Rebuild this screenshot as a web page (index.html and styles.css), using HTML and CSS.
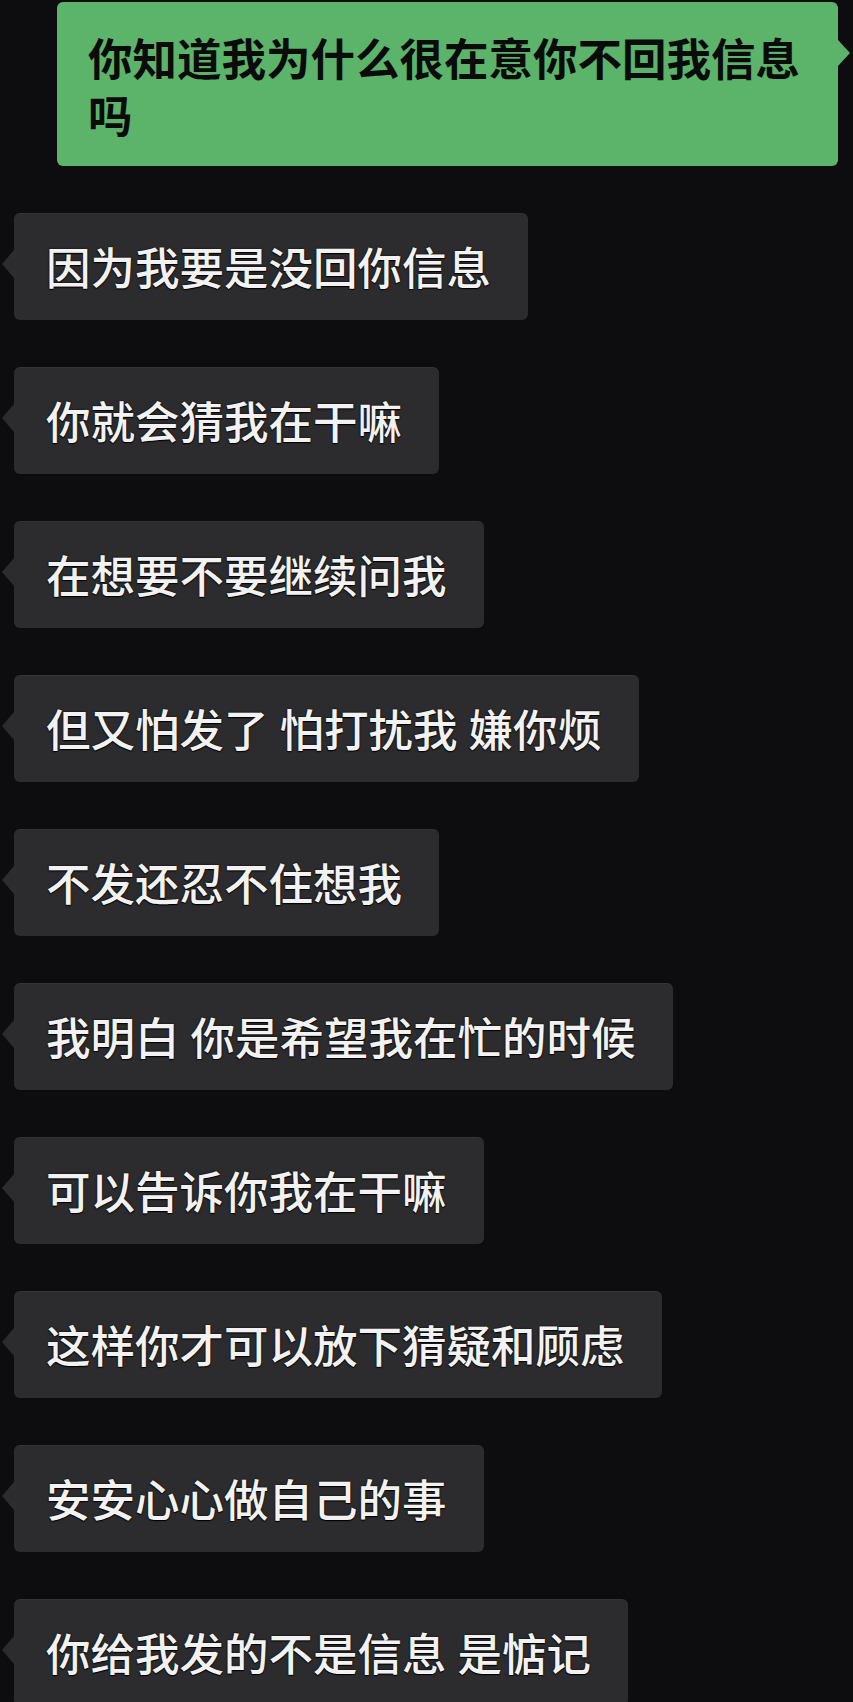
FILE: index.html
```html
<!DOCTYPE html>
<html lang="zh-CN">
<head>
<meta charset="utf-8">
<title>聊天</title>
<link rel="stylesheet" href="styles.css">
</head>
<body>
<div class="chat">
  <div class="row row-me">
    <div class="bubble bubble-me">你知道我为什么很在意你不回我信息吗</div>
  </div>
  <div class="row"><div class="bubble bubble-other">因为我要是没回你信息</div></div>
  <div class="row"><div class="bubble bubble-other">你就会猜我在干嘛</div></div>
  <div class="row"><div class="bubble bubble-other">在想要不要继续问我</div></div>
  <div class="row"><div class="bubble bubble-other">但又怕发了 怕打扰我 嫌你烦</div></div>
  <div class="row"><div class="bubble bubble-other">不发还忍不住想我</div></div>
  <div class="row"><div class="bubble bubble-other">我明白 你是希望我在忙的时候</div></div>
  <div class="row"><div class="bubble bubble-other">可以告诉你我在干嘛</div></div>
  <div class="row"><div class="bubble bubble-other">这样你才可以放下猜疑和顾虑</div></div>
  <div class="row"><div class="bubble bubble-other">安安心心做自己的事</div></div>
  <div class="row"><div class="bubble bubble-other">你给我发的不是信息 是惦记</div></div>
</div>
</body>
</html>
```
FILE: styles.css
```css
html, body {
  margin: 0;
  padding: 0;
  background: #0d0d0f;
}
body {
  font-family: "Noto Sans CJK SC", "Noto Sans", sans-serif;
  overflow: hidden;
  height: 1702px;
}
.chat {
  display: flex;
  flex-direction: column;
  gap: 47px;
  padding: 2px 15px 0 14px;
}
.row {
  display: flex;
  justify-content: flex-start;
}
.row-me {
  justify-content: flex-end;
}
.bubble {
  position: relative;
  font-size: 44.5px;
  border-radius: 6px;
  word-spacing: 1px;
}
.bubble-me {
  width: 781px;
  box-sizing: border-box;
  background: #5bb46a;
  color: #0b0b0b;
  font-weight: 700;
  line-height: 57px;
  padding: 26px 32px 24px 31px;
}
.bubble-me::after {
  content: "";
  position: absolute;
  right: -12px;
  top: 38px;
  border-left: 12px solid #5bb46a;
  border-top: 13px solid transparent;
  border-bottom: 13px solid transparent;
}
.bubble-other {
  background: #2c2c2e;
  color: #f2f2f2;
  font-weight: 500;
  line-height: 62px;
  padding: 22px 37px 23px 32px;
  text-shadow: 0 0 2px #000, 0 1px 1px #000;
  box-shadow: inset 0 1px 0 rgba(255,255,255,0.04);
}
.bubble-other::before {
  content: "";
  position: absolute;
  left: -12px;
  top: 37px;
  border-right: 12px solid #2c2c2e;
  border-top: 14px solid transparent;
  border-bottom: 14px solid transparent;
}
```
